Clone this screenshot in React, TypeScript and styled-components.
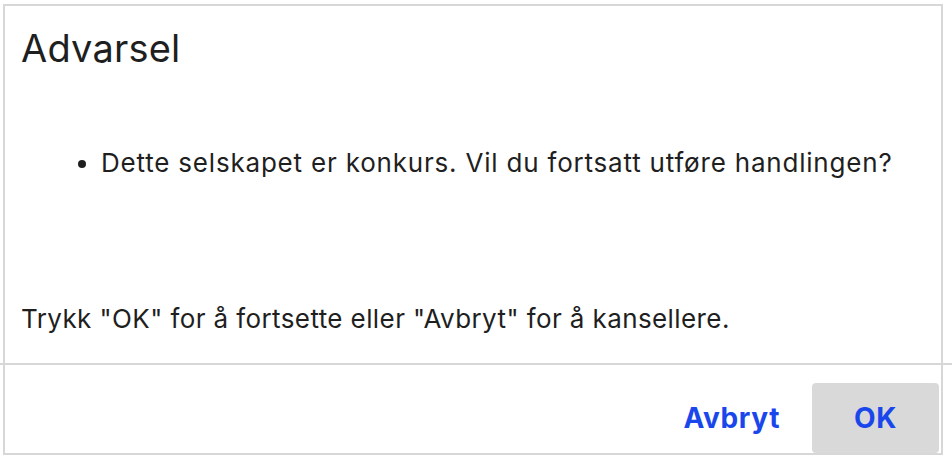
import React from 'react';
import styled, { createGlobalStyle } from 'styled-components';

const GlobalStyle = createGlobalStyle`
    body {
        margin: 0;
        background: #ffffff;
        font-family: Inter, "Noto Sans", sans-serif;
        color: #1f1f1f;
    }
`;

const Dialog = styled.div`
    box-sizing: border-box;
    width: 940px;
    height: 451px;
    margin: 4px 0 0 3px;
    border: 2px solid #d7d7d7;
    display: flex;
    flex-flow: column nowrap;
`;

const Body = styled.div`
    flex: 1;
    padding: 0 16px;
`;

const Title = styled.h2`
    margin: 20px 0 0;
    font-size: 38px;
    line-height: 44px;
    font-weight: 400;
    letter-spacing: 0.2px;
`;

const Messages = styled.ul`
    margin: 77px 0 0;
    padding-left: 80px;
    font-size: 26px;
    line-height: 32px;
    letter-spacing: 0.8px;
`;

const Note = styled.p`
    margin: 124px 0 0;
    font-size: 26px;
    line-height: 32px;
    letter-spacing: 0.4px;
`;

const Footer = styled.div`
    position: relative;
    display: flex;
    justify-content: flex-end;
    align-items: flex-end;
    height: 88px;
    padding-right: 2px;
    box-sizing: border-box;

    &::before {
        content: '';
        position: absolute;
        top: -2px;
        left: -5px;
        right: -11px;
        height: 2px;
        background: #d7d7d7;
    }
`;

const Button = styled.button<{ primary?: boolean }>`
    height: 70px;
    min-width: 127px;
    padding: 0 32px;
    border: none;
    border-radius: 4px;
    background: ${props => (props.primary ? '#d9d9d9' : 'transparent')};
    color: #1a47ec;
    font-family: Inter, "Noto Sans", sans-serif;
    font-size: 28px;
    font-weight: 700;
    letter-spacing: 0.6px;
    cursor: pointer;
`;

const App = () => (
    <>
        <GlobalStyle />
        <Dialog>
            <Body>
                <Title>Advarsel</Title>
                <Messages>
                    <li>Dette selskapet er konkurs. Vil du fortsatt utføre handlingen?</li>
                </Messages>
                <Note>Trykk "OK" for å fortsette eller "Avbryt" for å kansellere.</Note>
            </Body>
            <Footer>
                <Button>Avbryt</Button>
                <Button primary>OK</Button>
            </Footer>
        </Dialog>
    </>
);

export default App;
